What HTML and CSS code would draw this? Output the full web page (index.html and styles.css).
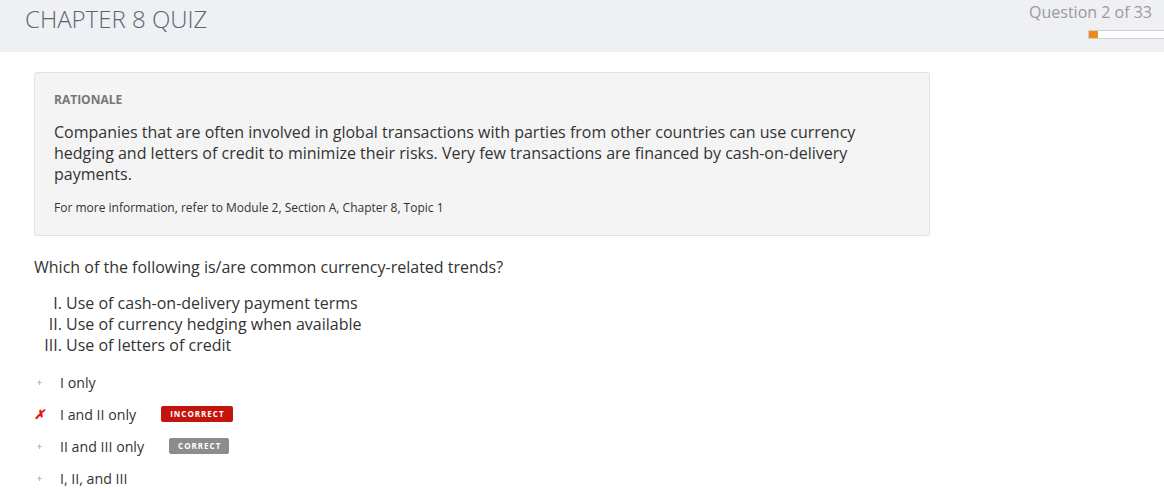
FILE: index.html
```html
<!DOCTYPE html>
<html>
<head>
<meta charset="utf-8">
<link rel="stylesheet" href="styles.css">
</head>
<body>
<header class="top">
  <h1 class="title">CHAPTER 8 QUIZ</h1>
  <div class="progress">
    <div class="count">Question 2 of 33</div>
    <div class="bar"><div class="fill" style="width:9px"></div></div>
  </div>
</header>
<main class="content">
  <section class="rationale">
    <div class="r-label">RATIONALE</div>
    <p class="r-text">Companies that are often involved in global transactions with parties from other countries can use currency hedging and letters of credit to minimize their risks. Very few transactions are financed by cash-on-delivery payments.</p>
    <p class="r-ref">For more information, refer to Module 2, Section A, Chapter 8, Topic 1</p>
  </section>
  <p class="question">Which of the following is/are common currency-related trends?</p>
  <ol class="stmts">
    <li>Use of cash-on-delivery payment terms</li>
    <li>Use of currency hedging when available</li>
    <li>Use of letters of credit</li>
  </ol>
  <ul class="options">
    <li class="opt"><span class="mark dot"></span><span class="opt-text">I only</span></li>
    <li class="opt"><span class="mark x">✗</span><span class="opt-text">I and II only</span><span class="badge bad">INCORRECT</span></li>
    <li class="opt"><span class="mark dot"></span><span class="opt-text">II and III only</span><span class="badge good">CORRECT</span></li>
    <li class="opt"><span class="mark dot"></span><span class="opt-text">I, II, and III</span></li>
  </ul>
</main>
</body>
</html>
```
FILE: styles.css
```css
* { box-sizing: border-box; }
html, body { margin: 0; padding: 0; background: #fff; }
body { font-family: "Open Sans", "Liberation Sans", sans-serif; color: #333; overflow: hidden; }

.top {
  height: 52px;
  background: #eff0f4;
  display: flex;
  justify-content: space-between;
  align-items: flex-start;
}
.title {
  margin: 0;
  padding: 4px 0 0 25px;
  font-weight: 300;
  font-size: 24px;
  line-height: 30px;
  color: #5d6470;
}
.progress {
  display: flex;
  flex-direction: column;
  align-items: flex-end;
  padding-top: 1px;
}
.count {
  font-size: 16px;
  line-height: 22px;
  color: #9a9a9a;
  padding-right: 12px;
}
.bar {
  margin-top: 7px;
  width: 76px;
  height: 9px;
  background: #fff;
  border: 1px solid #cfcfcf;
  border-right: 0;
  display: flex;
}
.fill { background: #f08a1c; height: 100%; }

.content { padding: 20px 0 0 34px; }

.rationale {
  width: 896px;
  background: #f4f4f4;
  border: 1px solid #e2e2e2;
  border-radius: 3px;
  padding: 19px 19px 19px 19px;
}
.r-label {
  font-size: 12px;
  font-weight: 700;
  color: #777;
  line-height: 16px;
}
.r-text {
  margin: 14px 0 0 0;
  font-size: 16px;
  line-height: 21px;
  color: #333;
  width: 820px;
}
.r-ref {
  margin: 14px 0 0 0;
  font-size: 12px;
  line-height: 17px;
  color: #333;
}

.question {
  margin: 21px 0 0 0;
  font-size: 16px;
  line-height: 21px;
}
.stmts {
  list-style: upper-roman;
  margin: 15px 0 0 0;
  padding-left: 32px;
  font-size: 16px;
  line-height: 21px;
}
.options {
  list-style: none;
  margin: 10px 0 0 0;
  padding: 0;
}
.opt {
  display: flex;
  align-items: center;
  height: 32px;
  font-size: 14.2px;
}
.mark {
  width: 26px;
  flex: none;
  display: flex;
  justify-content: flex-start;
  align-items: center;
}
.dot { padding-left: 3px; }
.dot::before {
  content: "";
  width: 5px;
  height: 5px;
  background:
    linear-gradient(#bdbdbd, #bdbdbd) center / 5px 1px no-repeat,
    linear-gradient(#bdbdbd, #bdbdbd) center / 1px 5px no-repeat;
  display: block;
}
.x {
  padding-left: 0;
  color: #e8140b;
  font-weight: 700;
  font-size: 13px;
  font-style: italic;
}
.opt-text { color: #333; }
.badge {
  margin-left: 25px;
  font-size: 8px;
  font-weight: 700;
  letter-spacing: 1px;
  color: #fff;
  line-height: 16px;
  padding: 0 8px 0 9px;
  border-radius: 2px;
}
.bad { background: #c4150c; }
.good { background: #8c8c8c; }
```
